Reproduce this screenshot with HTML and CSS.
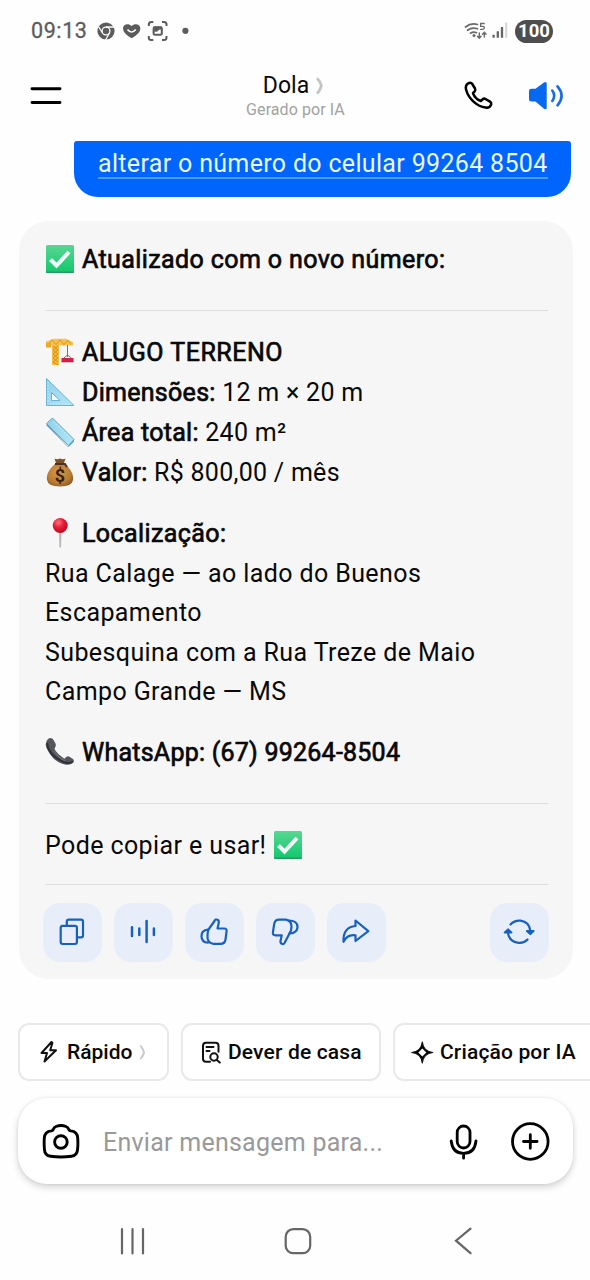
FILE: index.html
```html
<!DOCTYPE html>
<html lang="pt-BR">
<head>
<meta charset="utf-8">
<title>Dola</title>
<link rel="stylesheet" href="styles.css">
</head>
<body>
<svg class="defs" width="0" height="0" aria-hidden="true">
  <defs>
    <linearGradient id="green" x1="0" y1="0" x2="0" y2="1"><stop offset="0" stop-color="#58d693"/><stop offset="1" stop-color="#10c86c"/></linearGradient>
    <linearGradient id="blue" x1="0" y1="0" x2="1" y2="1"><stop offset="0" stop-color="#8fd0ea"/><stop offset="1" stop-color="#b4e6f7"/></linearGradient>
    <radialGradient id="red" cx=".38" cy=".3" r=".7"><stop offset="0" stop-color="#ff7380"/><stop offset=".5" stop-color="#e81c35"/><stop offset="1" stop-color="#b80d22"/></radialGradient>
    <radialGradient id="gold" cx=".45" cy=".4" r=".65"><stop offset="0" stop-color="#d99b4b"/><stop offset=".7" stop-color="#b87b33"/><stop offset="1" stop-color="#8d5a22"/></radialGradient>
    <symbol id="check" viewBox="0 0 30 30">
      <rect x="1" y="1" width="28" height="28" rx="1.5" fill="url(#green)"/>
      <path d="M1 27.500h28v.5q0 1-1 1H2q-1 0-1-1z" fill="#2a9864"/>
      <path d="M5.500 15.500 11.500 21.500 24 8" fill="none" stroke="#f4fff9" stroke-width="4"/>
    </symbol>
  </defs>
</svg>
<div class="screen">
  <div class="status">
    <span class="time">09:13</span>
    <svg class="status-left" width="96" height="24" viewBox="96 19 96 24">
      <circle cx="106" cy="31" r="8.600" fill="#5c5c5c"/>
      <circle cx="106" cy="31" r="3.900" fill="#5c5c5c" stroke="#fff" stroke-width="1.300"/>
      <path d="M106 27h8M102.600 33l-4.200-6.500M109.500 33l-4 7" stroke="#fff" stroke-width="1.300"/>
      <path d="M131.600 38.300 Q123 33.500 123 28.500 C123 24 128.500 23 131.600 26 C134.700 23 140.400 24 140.400 28.500 Q140.400 33.500 131.600 38.300Z" fill="#5c5c5c"/>
      <path d="M127.500 29.500q4.100 5 8.200 0" fill="none" stroke="#fff" stroke-width="1.700"/>
      <g fill="none" stroke="#5c5c5c" stroke-width="2">
        <path d="M148.800 26v-1.500q0-2.500 2.500-2.500h2M162 22h2q2.500 0 2.500 2.500V26M166.500 36v1.500q0 2.500-2.500 2.500h-2M153.300 40h-2q-2.500 0-2.500-2.500V36"/>
        <rect x="153.600" y="27.300" width="8.200" height="7.500" rx="1.500"/>
      </g>
      <path d="M153 31.500v-4q0-1 1-1h8v2.800l-3 .5-2 2z" fill="#5c5c5c"/>
      <circle cx="185.400" cy="30.800" r="3.100" fill="#5c5c5c"/>
    </svg>
    <svg class="signal" width="46" height="24" viewBox="463 19 46 24">
      <g fill="none" stroke="#6a6a6a" stroke-width="1.700" stroke-linecap="round">
        <path d="M465.500 27q5.500-4.500 12-2.500M467.500 30.200q4.500-3.200 10-1.400M470.500 33.200q3-2 6-.5"/>
        <path d="M479.300 33v5m-1.800-1.700 1.800 2 1.800-2M484.300 37v-4.500m-1.800 1.700 1.800-2 1.800 2" stroke-width="1.400"/>
        <path d="M484.200 23.500h-3.600v2.800h2q1.800 0 1.800 1.500t-1.800 1.500h-2" stroke-width="1.300"/>
      </g>
      <circle cx="474" cy="35.500" r="1.500" fill="#6a6a6a"/>
      <path d="M493.600 37.800v-3M497.800 37.800v-6.500M502 37.800V27" stroke="#666" stroke-width="2.300"/>
      <path d="M506.200 37.800V22.500" stroke="#d5d5d5" stroke-width="2"/>
    </svg>
    <span class="battery">100</span>
  </div>

  <header class="header">
    <svg class="menu" width="32" height="20" viewBox="30 86 32 20"><path d="M32 88.700h28M32 102.500h28" stroke="#000" stroke-width="2.900" stroke-linecap="round"/></svg>
    <div class="title">
      <div class="name">Dola <svg width="9" height="20" viewBox="315 75 9 20"><path d="M316.800 77.500q2.600 1.500 4.600 7.200-2 6-4.600 7.800" fill="none" stroke="#c4c4c4" stroke-width="2.700"/></svg></div>
      <div class="sub">Gerado por IA</div>
    </div>
    <svg class="call" width="104" height="34" viewBox="462 79 104 34">
      <path d="M468.300 83.300C466 84.500 465.400 87 466.200 90 C468.500 98.500 477 106.500 485.500 107.600 C488.500 108 490.500 106.500 491.200 104.300 C491.500 103 491 102.200 490 101.600 L485.500 99 C484.400 98.400 483.400 98.500 482.600 99.300 L480.900 101 C477.500 99.800 474.300 96.500 473 93.200 L474.700 91.400 C475.500 90.500 475.600 89.600 475 88.500 L472.300 84 C471.400 82.600 470 82.300 468.300 83.300Z" fill="none" stroke="#000" stroke-width="2.500" stroke-linejoin="round"/>
      <path d="M531.300 88.700h4.200l8.500-6.200q2.700-1.600 2.700 1.300v23.600q0 2.900-2.700 1.300l-8.500-7.200h-4.200q-2.300 0-2.300-2.300v-8.200q0-2.300 2.300-2.300z" fill="#0768f2"/>
      <path d="M552.300 90.500q3.800 5 0 10.500M557.500 86.300q8.200 9.500 0 19" fill="none" stroke="#176de3" stroke-width="2.600" stroke-linecap="round"/>
    </svg>
  </header>

  <main class="chat">
    <div class="bubble"><span>alterar o número do celular 99264 8504</span></div>
    <section class="card">
      <div class="line first"><svg class="emoji"><use href="#check"/></svg><b>Atualizado com o novo número:</b></div>
      <hr>
      <div class="group details">
        <div class="line rent"><svg class="emoji" viewBox="0 0 30 30">
          <path d="M7 5h7v23H7z" fill="#f4bb3c"/><path d="M8 9l5 4-5 4 5 4-5 4 5 3M13 9l-5 4 5 4-5 4 5 4" fill="none" stroke="#d98d1c" stroke-width="1"/>
          <path d="M1 4.500 9 1.800h12l7 3.200v3.500H1z" fill="#f7c34d"/><path d="M3 7.500 7 3l4 4.500 4-4.500 4 4.500 4-4 3 4" fill="none" stroke="#e29b2c" stroke-width="1.100"/>
          <rect x="1" y="6" width="5" height="4.500" fill="#eca82d"/><path d="M22.500 8v12M19 21l3.500-3 4 3" stroke="#777" fill="none"/>
          <rect x="16.500" y="21" width="12" height="3.800" fill="#d31f45"/><path d="M16.500 24.800h12" stroke="#81324a"/>
        </svg><b>ALUGO TERRENO</b></div>
        <div class="line facts"><svg class="emoji" viewBox="0 0 30 30"><path fill-rule="evenodd" d="M1.500 1.500 29 28.500H1.500zM6.500 15.500v8h8.500z" fill="url(#blue)" stroke="#69b4d5"/><path d="M3 5v21M5 27h20" stroke="#d7f2fb" stroke-dasharray="1 2"/></svg><span><b>Dimensões:</b> 12 m × 20 m</span></div>
        <div class="line facts"><svg class="emoji" viewBox="0 0 30 30"><path d="M1.500 6.500 7.500 1 29 22.500 23.500 28.500z" fill="url(#blue)" stroke="#5fa9cc"/><path d="M1.500 6.500v2L23 30l.5-1.500 5.500-6v2L23.500 30" fill="#5d9abc"/><path d="M9 5 25 21" stroke="#c4ebf8" stroke-width="2" stroke-dasharray="1 2"/></svg><span><b>Área total:</b> 240 m²</span></div>
        <div class="line facts"><svg class="emoji" viewBox="0 0 30 30"><path d="M11 6C5 11 1 17 2 23q1 6.500 13 6.500T28 23c1-6-3-12-9-17z" fill="url(#gold)"/><path d="M9.500 1.500q3 1.500 5.500 0 3 1.500 5.500 0L19 6h-8z" fill="#7c5127"/><path d="M10 7h10l2 3" stroke="#4b3220" stroke-width="2" fill="none"/><text x="15" y="24.500" class="dollar">$</text></svg><span><b>Valor:</b> R$ 800,00 / mês</span></div>
      </div>
      <div class="group place">
        <div class="line"><svg class="emoji" viewBox="0 0 30 30"><path d="M14 13h2.500l-.5 16-.8 1-.8-1z" fill="#b5b8bb"/><circle cx="15.200" cy="7.500" r="7.500" fill="url(#red)"/></svg><b>Localização:</b></div>
        <div class="line"><span>Rua Calage — ao lado do Buenos</span></div>
        <div class="line"><span>Escapamento</span></div>
        <div class="line"><span>Subesquina com a Rua Treze de Maio</span></div>
        <div class="line"><span>Campo Grande — MS</span></div>
      </div>
      <div class="line whats"><svg class="emoji" viewBox="0 0 30 30"><path d="M3 2Q-1 6 2 12q6 13 18 15.500 6 1 8.500-2.500 1-1.500-.5-3l-4-2.500q-1.500-.5-3 .7l-1.500 1.500Q12 17 9.500 12l1-2.500q.7-1.500 0-3L8.500 3Q6.500-.5 3 2z" fill="#55565c"/><path d="M2 6q2 13 17 19 5 2 9-.5" fill="none" stroke="#303138" stroke-width="2"/><path d="M9 14q4 7 11 10" fill="none" stroke="#777880"/></svg><b>WhatsApp: (67) 99264-8504</b></div>
      <hr>
      <div class="line last"><span>Pode copiar e usar!</span><svg class="emoji end"><use href="#check"/></svg></div>
      <hr>
      <div class="actions">
        <button><svg viewBox="43 903 59 59"><path d="M66.800 925v-3.500q0-1.900 1.900-1.900h12.400q1.900 0 1.900 1.900v14q0 1.900-1.900 1.900H77.500"/><rect x="60.700" y="925.800" width="16.200" height="18.200" rx="1.900"/></svg></button>
        <button><svg viewBox="114 903 59 59"><path d="M132 927.200v8.800M139.300 928.500v6.500M146.600 921v21M153.900 928.500v6.500" stroke-width="2.500"/></svg></button>
        <button><svg viewBox="185 903 59 59"><path d="M208.500 929.500 214.500 921q1-2.200 3-1.200 1.800 1 1.200 3.200l-1.200 5.500h6.800q2.500 0 2.300 2.500l-1.100 8.500q-.6 4.300-5 4.300H213q-6-1.500-5.500-7.500 0-4 1-6.800z"/><path d="M208 929.700q-6.500.5-6.500 6.500t6.500 6.500"/></svg></button>
        <button><svg viewBox="256 903 59 59"><path d="M289.500 933.500 284.500 943q-1 1.600-2.700.8-1.800-1-1.200-3.200l1.100-5.300h-6.300q-2.800 0-2.500-2.800l1.300-8.500q.7-4.300 5-4.300H286q5.500 1 5.500 7 0 4-2 6.800z"/><path d="M288.500 920.500q9 0 9 6.500 0 6-8 6.500"/></svg></button>
        <button><svg viewBox="327 903 59 59"><path d="M355.500 920.500 368.300 931.200 355.500 941v-5.700q-8-1.500-12 6.500-.8-14.500 12-15.800z"/></svg></button>
        <button class="refresh"><svg viewBox="490 903 59 59"><path d="M510.500 924.500q4-4.300 10-3.800 8.800 1.300 9.800 10M527.500 939.500q-4 4.300-10 3.200-8.400-1.700-9.700-10"/><path d="m527 931 3.300 3 3.200-3zM504.800 932.500l3.300-3 3.200 3z" fill="#1760c0"/></svg></button>
      </div>
    </section>
  </main>

  <nav class="chips">
    <div class="chip quick"><svg width="20" height="26" viewBox="39 1039 20 26"><path d="M51.500 1042 41.500 1053h5.500l-2.500 8.500 11.500-11.300h-5.800l2.200-7.200z"/></svg><span>Rápido</span><svg class="arrow" width="7" height="16" viewBox="140 1044 7 16"><path d="M141.800 1046q2.800 4 3.200 6.500-.4 2.500-3.200 6"/></svg></div>
    <div class="chip homework"><svg width="20" height="26" viewBox="201 1039 20 26"><path d="M210 1061.800h-4q-3 0-3-3v-13q0-3 3-3h9.500q3 0 3 3v6M206.500 1047h7M206.500 1051h3"/><circle cx="214" cy="1057" r="3.700"/><path d="m216.800 1060 3 2.500"/></svg><span>Dever de casa</span></div>
    <div class="chip create"><svg width="24" height="26" viewBox="411 1039 24 26"><path d="M422.300 1042q1 9.500 10.500 10.500-9.500 1-10.500 10.500-1-9.500-10.500-10.500 9.500-1 10.500-10.500z" fill="#000" stroke-width="1.200"/><path d="m422.300 1048.500 4 4-4 4-4-4z" fill="#fff" stroke="none"/></svg><span>Criação por IA</span></div>
  </nav>
  <div class="composer">
    <svg width="38" height="36" viewBox="42 1123 38 36"><path d="M56 1126.500q5-2 10 0 2 .8 2.800 3 .6 1.200 2 1.400 6.500.6 6.900 7.100.5 6-.2 12-.6 5.500-6 6.200-10.500 1.500-21 0-5.500-.7-6-6.200-.6-6-.2-12 .5-6.500 7-7.100 1.300-.2 1.900-1.400.8-2.200 2.800-3z" fill="none" stroke="#000" stroke-width="2.900"/><circle cx="60.900" cy="1142" r="6.300" fill="none" stroke="#000" stroke-width="2.900"/></svg>
    <span class="placeholder">Enviar mensagem para...</span>
    <svg class="voice" width="104" height="42" viewBox="447 1120 104 42"><g fill="none" stroke="#000" stroke-width="2.800" stroke-linecap="round"><rect x="457.200" y="1126" width="12.800" height="22" rx="6.400"/><path d="M451.200 1141q1.300 12.300 12.400 12.300T476 1141M463.600 1153.500v4.700"/><circle cx="530.300" cy="1141.500" r="17.800"/><path d="M523.500 1141.500h13.600M530.300 1134.700v13.600"/></g></svg>
  </div>
  <footer class="system">
    <svg width="26" height="28" viewBox="120 1227 26 28"><path d="M122 1229v24.500M132.500 1229v24.500M143 1229v24.500"/></svg>
    <svg class="home" width="28" height="28" viewBox="284 1227 28 28"><rect x="285.700" y="1229.200" width="24.500" height="24" rx="7.500"/></svg>
    <svg width="18" height="28" viewBox="454 1227 18 28"><path d="M470.500 1228.700 456 1240.700l14.500 12.500"/></svg>
  </footer>
</div>
</body>
</html>
```
FILE: styles.css
```css
* { box-sizing: border-box; }
body { margin: 0; background: #fefefe; font-family: Roboto, sans-serif; color: #090909; }
svg { display: block; flex: none; }
.defs { position: absolute; }
.screen { width: 590px; height: 1280px; overflow: hidden; display: flex; flex-direction: column; background: #fefefe; }

.status { height: 60px; padding: 2px 37px 0 31px; display: flex; align-items: center; flex: none; }
.time { width: 65px; font-size: 21.5px; line-height: 24px; color: #5c5c5c; white-space: nowrap; -webkit-text-stroke: .3px #5c5c5c; letter-spacing: .6px; }
.signal { margin-left: auto; margin-right: 6px; }
.battery { width: 38px; height: 23px; border-radius: 12px; background: #4e4e4e; color: #fff; font-size: 18.5px; line-height: 23px; font-weight: 700; text-align: center; }

.header { height: 81px; padding: 0 24px 0 30px; display: flex; justify-content: space-between; flex: none; }
.menu { margin-top: 26px; }
.title { margin-left: 67px; padding-top: 11px; text-align: center; }
.name { display: flex; align-items: center; justify-content: center; gap: 6px; height: 29px; padding-right: 4px; font-size: 23px; }
.sub { line-height: 20px; font-size: 16px; letter-spacing: .08px; color: #a2a2a2; white-space: nowrap; }
.call { margin-top: 19px; }

.chat { flex: none; padding: 0 17px 0 19px; }
.bubble { height: 56px; margin: 0 2px 24px 55px; padding: 8px 23px 0 24px; border-radius: 3px 3px 24px 24px; background: #0065fd; color: #e9f6ff; white-space: nowrap; }
.bubble span { display: inline-block; height: 30px; line-height: 30px; font-size: 25px; letter-spacing: .33px; border-bottom: 2px solid #4d9bff; }
.card { width: 554px; height: 758px; padding: 18px 25px 0 26px; border-radius: 30px; background: #f6f6f6; }
.line { height: 40px; line-height: 38px; font-size: 25px; letter-spacing: .4px; display: flex; align-items: center; white-space: nowrap; }
.line > b, .line > span { padding-top: 2px; }
.line b { font-weight: 400; -webkit-text-stroke: .7px #090909; }
.emoji { width: 30px; height: 30px; margin-right: 7px; }
.emoji.end { margin: 0 0 0 7px; }
.dollar { font: 700 18px Roboto, sans-serif; text-anchor: middle; fill: #35200c; }
.card hr { height: 1px; margin: 0; border: 0; background: #dedede; }
.first { margin-bottom: 31px; }
.details { margin-top: 21px; }
.rent { letter-spacing: .5px; }
.facts { letter-spacing: .28px; }
.place { margin-top: 21px; }
.place .line + .line { height: 39.5px; }
.whats { margin: 21px 0 31px; letter-spacing: .24px; }
.last { margin: 21px 0 19px; }
.actions { display: flex; gap: 12px; margin: 18px -1px 0 -2px; }
.actions button { width: 59px; height: 59px; padding: 0; border: 0; border-radius: 17px; background: #e8eef9; }
.actions svg { width: 59px; height: 59px; fill: none; stroke: #1760c0; stroke-width: 2.2; stroke-linejoin: round; stroke-linecap: round; }
.actions .refresh { margin-left: auto; }

.chips { display: flex; gap: 12px; margin: 44px 0 0 18px; flex: none; }
.chip { height: 58px; flex: none; display: flex; align-items: center; border: 2px solid #e9e9e9; border-radius: 11px; padding-left: 19px; font-size: 21px; font-weight: 500; white-space: nowrap; background: #fff; }
.chip svg { fill: none; stroke: #111; stroke-width: 2; stroke-linejoin: round; stroke-linecap: round; }
.chip span { margin-left: 8px; }
.quick { width: 151px; }
.homework { width: 200px; padding-left: 18px; letter-spacing: .15px; }
.homework span { margin-left: 7px; }
.create { width: 220px; padding-left: 16px; letter-spacing: .15px; }
.create span { margin-left: 5px; }
.chip .arrow { margin-left: 7px; stroke: #c9c9c9; }

.composer { width: 555px; height: 86px; margin: 17px 0 0 18px; padding: 0 22px 0 24px; border-radius: 29px; background: #fff; box-shadow: 0 3px 7px rgba(0,0,0,.18), 0 0 2px rgba(0,0,0,.08); display: flex; align-items: center; flex: none; }
.placeholder { margin-left: 23px; padding-top: 3px; font-size: 25px; letter-spacing: .25px; color: #999; white-space: nowrap; }
.voice { margin-left: auto; }

.system { height: 96px; padding: 18px 118px 0 120px; display: flex; justify-content: space-between; align-items: center; flex: none; }
.system svg { fill: none; stroke: #666; stroke-width: 2.2; stroke-linecap: round; }
.system .home { margin-right: 4px; }
```
